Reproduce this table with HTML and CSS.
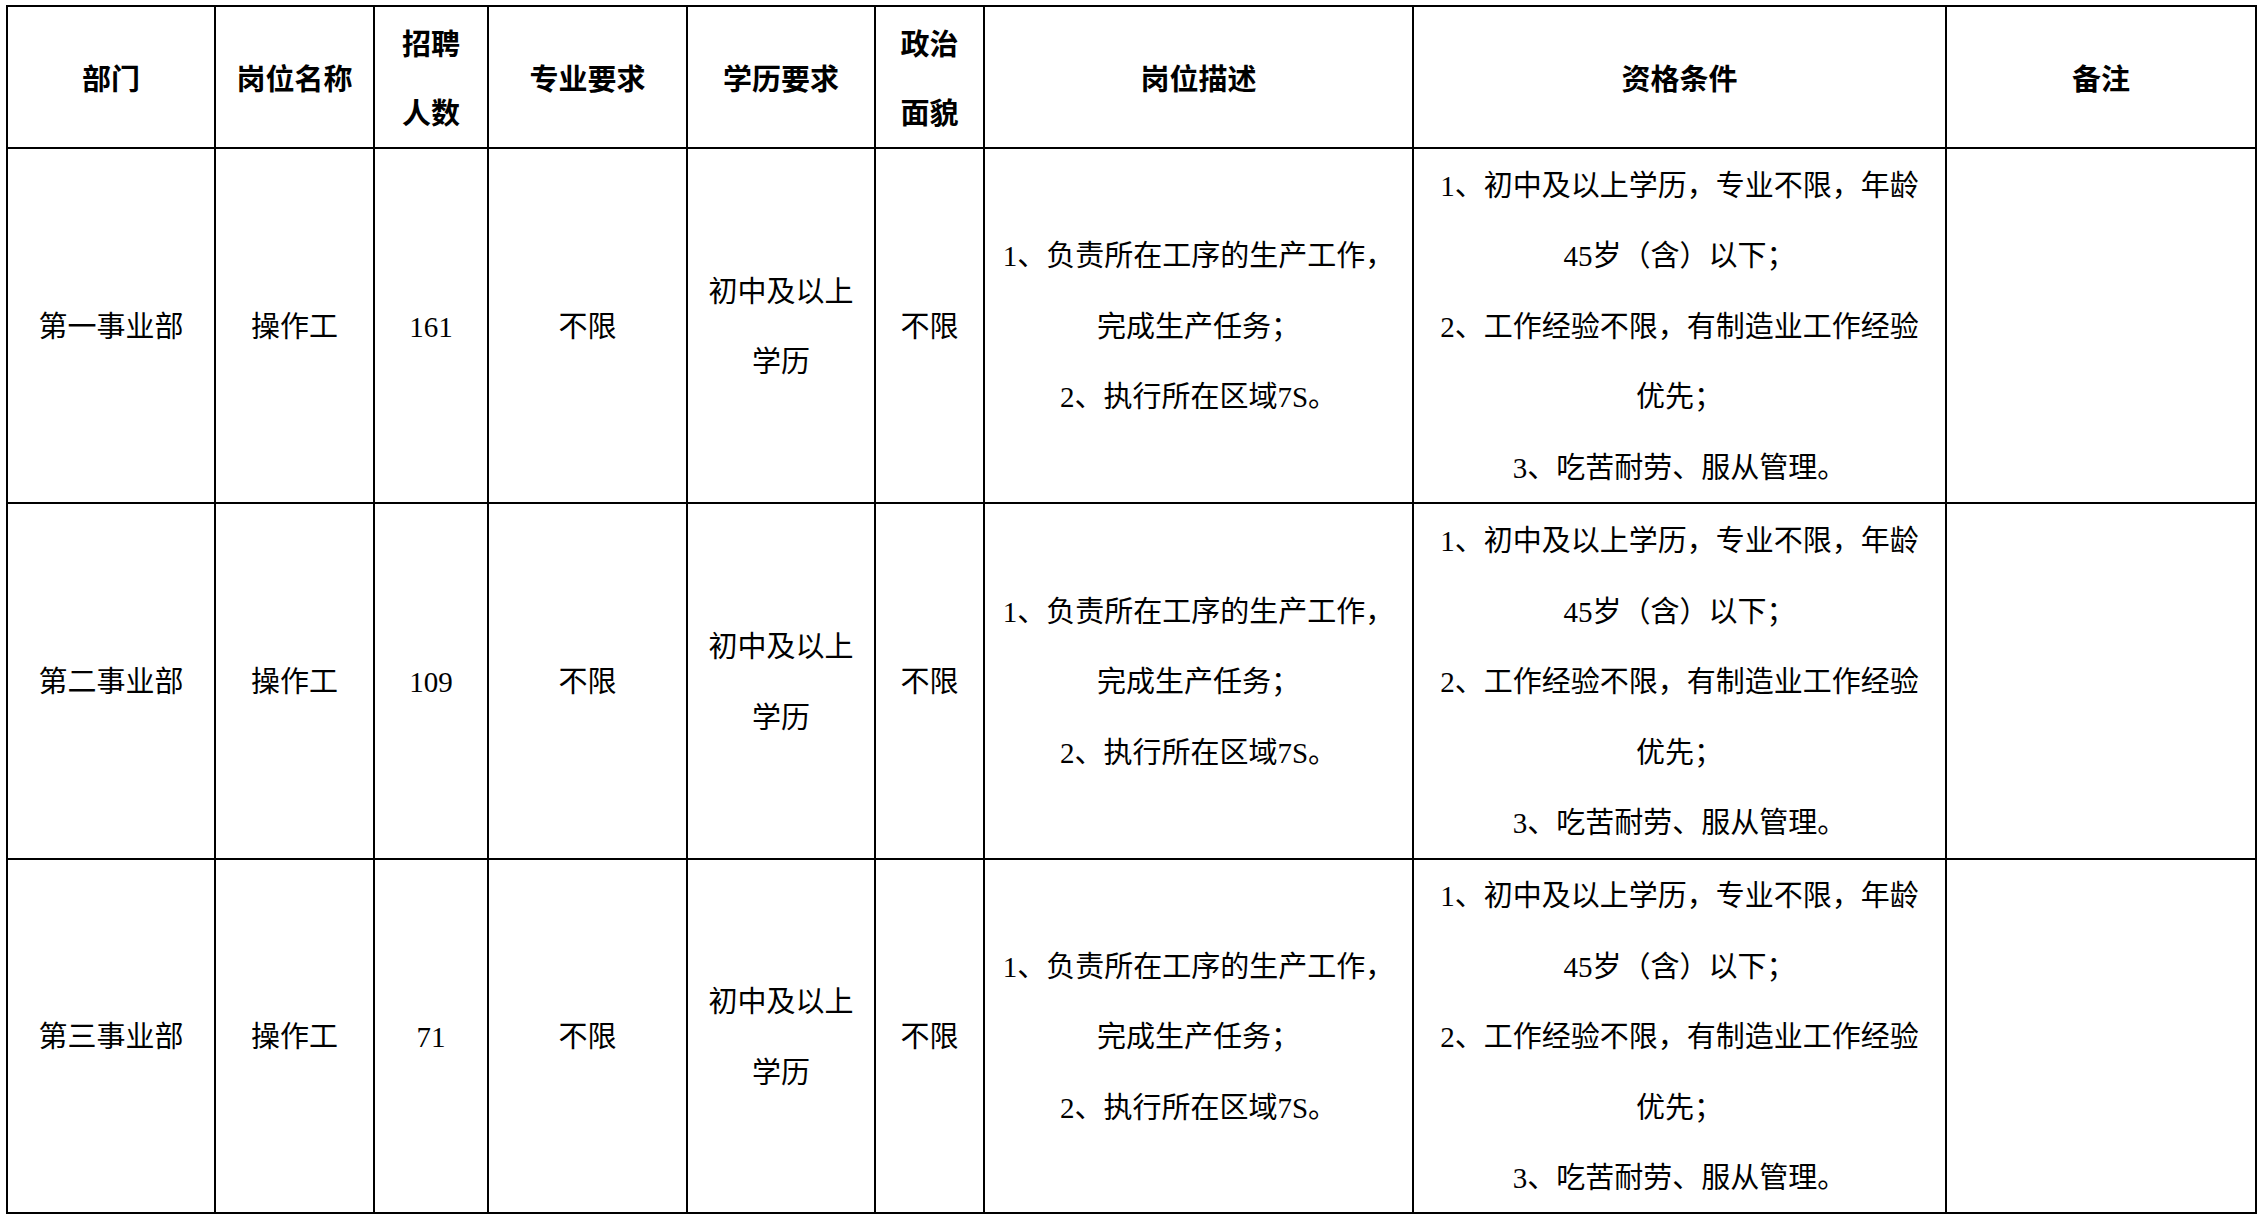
FILE: index.html
```html
<!DOCTYPE html>
<html lang="zh-CN">
<head>
<meta charset="utf-8">
<title>招聘岗位</title>
<link rel="stylesheet" href="styles.css">
</head>
<body>
<div class="sheet">
  <div class="cell head">部门</div>
  <div class="cell head">岗位名称</div>
  <div class="cell head">招聘<br>人数</div>
  <div class="cell head">专业要求</div>
  <div class="cell head">学历要求</div>
  <div class="cell head">政治<br>面貌</div>
  <div class="cell head">岗位描述</div>
  <div class="cell head">资格条件</div>
  <div class="cell head">备注</div>

  <div class="cell">第一事业部</div>
  <div class="cell">操作工</div>
  <div class="cell">161</div>
  <div class="cell">不限</div>
  <div class="cell">初中及以上<br>学历</div>
  <div class="cell">不限</div>
  <div class="cell">1、负责所在工序的生产工作，<br>完成生产任务；<br>2、执行所在区域7S。</div>
  <div class="cell">1、初中及以上学历，专业不限，年龄<br>45岁（含）以下；<br>2、工作经验不限，有制造业工作经验<br>优先；<br>3、吃苦耐劳、服从管理。</div>
  <div class="cell"></div>

  <div class="cell">第二事业部</div>
  <div class="cell">操作工</div>
  <div class="cell">109</div>
  <div class="cell">不限</div>
  <div class="cell">初中及以上<br>学历</div>
  <div class="cell">不限</div>
  <div class="cell">1、负责所在工序的生产工作，<br>完成生产任务；<br>2、执行所在区域7S。</div>
  <div class="cell">1、初中及以上学历，专业不限，年龄<br>45岁（含）以下；<br>2、工作经验不限，有制造业工作经验<br>优先；<br>3、吃苦耐劳、服从管理。</div>
  <div class="cell"></div>

  <div class="cell">第三事业部</div>
  <div class="cell">操作工</div>
  <div class="cell">71</div>
  <div class="cell">不限</div>
  <div class="cell">初中及以上<br>学历</div>
  <div class="cell">不限</div>
  <div class="cell">1、负责所在工序的生产工作，<br>完成生产任务；<br>2、执行所在区域7S。</div>
  <div class="cell">1、初中及以上学历，专业不限，年龄<br>45岁（含）以下；<br>2、工作经验不限，有制造业工作经验<br>优先；<br>3、吃苦耐劳、服从管理。</div>
  <div class="cell"></div>
</div>
</body>
</html>
```

FILE: styles.css
```css
html, body {
  margin: 0;
  padding: 0;
  background: #ffffff;
}

body {
  padding: 5px 0 0 6px;
  font-family: "Liberation Serif", "Noto Sans CJK SC", serif;
  color: #000000;
}

.sheet {
  display: grid;
  grid-template-columns: 206px 157px 112px 197px 186px 107px 427px 531px 308px;
  grid-template-rows: 140px 353px 354px 352px;
  gap: 2px;
  padding: 2px;
  width: max-content;
  background: #000000;
}

.cell {
  background: #ffffff;
  display: flex;
  align-items: center;
  justify-content: center;
  text-align: center;
  font-size: 29px;
  line-height: 70.5px;
  padding-top: 3px;
  white-space: nowrap;
  overflow: hidden;
}

.head {
  font-family: "Noto Sans CJK SC", sans-serif;
  font-weight: 700;
  line-height: 69px;
  padding-top: 0;
}
```
